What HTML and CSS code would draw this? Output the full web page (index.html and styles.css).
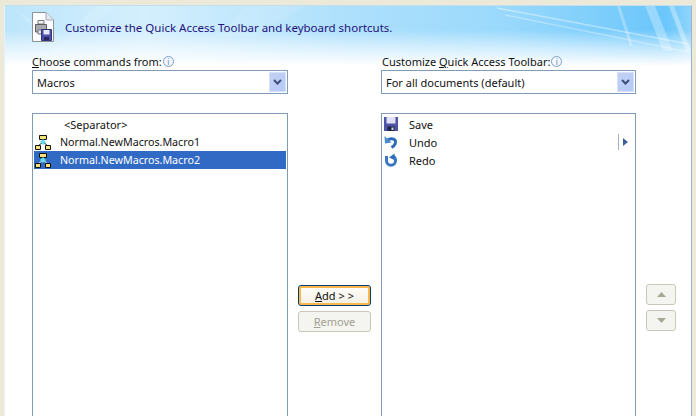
FILE: index.html
```html
<!DOCTYPE html>
<html lang="en">
<head>
  <meta charset="UTF-8">
  <title>Customize</title>
  <link rel="stylesheet" href="styles.css">
</head>
<body>
  <div class="panel">
    <!-- Streaks over the banner background -->
    <svg class="streaks" width="688" height="62" viewBox="0 0 688 62">
      <g fill="#fff">
        <path d="M14 8L20 8L62 50L56 50Z" opacity=".12"/>
        <path d="M90 0L110 0L60 45L48 45Z" opacity=".1"/>
        <path d="M240 0L300 0L250 30L215 30Z" opacity=".1"/>
        <path d="M612 0L615 0L628 40L625 40Z" opacity=".3"/>
        <path d="M640 0L650 0L668 45L658 45Z" opacity=".3"/>
        <path d="M664 0L669 0L686 45L681 45Z" opacity=".35"/>
      </g>
      <g stroke="#fff" fill="none">
        <path d="M492 2L684 38" stroke-width="1.500" opacity=".4"/>
        <path d="M500 9L684 46" stroke-width="1.500" opacity=".3"/>
      </g>
    </svg>

    <!-- Banner -->
    <div class="banner">
      <svg class="banner-icon" width="22" height="31" viewBox="0 0 22 31">
        <path d="M.5.5H14L21.5 8V29.5H.5Z" fill="#fbfcfe" stroke="#8c9097"/>
        <path d="M14 .5V8H21.5" fill="#e4e8ee" stroke="#a5a9b0"/>
        <path d="M6 8.500H12V12H6Z" fill="#f3f3f3" stroke="#77797c"/>
        <path d="M3.500 12.500H14.500V20H3.500Z" fill="#a9abad" stroke="#5d6063"/>
        <path d="M6 18H12V22H6Z" fill="#e9e9e9" stroke="#77797c"/>
        <path d="M9.500 17.500H19.500V28.500H9.500Z" fill="#4a4fa8" stroke="#34367c"/>
        <path d="M11.500 18H17.500V22.500H11.500Z" fill="#e5e8fa"/>
        <path d="M12 25H17V28H12Z" fill="#26285e"/>
      </svg>
      <span class="banner-text">Customize the Quick Access Toolbar and keyboard shortcuts.</span>
    </div>

    <div class="columns">
      <!-- Commands -->
      <div class="col">
        <div class="label"><u>C</u>hoose commands from:<span class="info">i</span></div>
        <div class="combo">
          <span>Macros</span>
          <span class="combo-btn">
            <svg width="9" height="6" viewBox="0 0 9 6"><path d="M1 1L4.500 4.500L8 1" fill="none" stroke="#3d4f78" stroke-width="2"/></svg>
          </span>
        </div>
        <div class="list">
          <div class="row"><span class="sep-text">&lt;Separator&gt;</span></div>
          <div class="row">
            <svg class="macro" width="16" height="15" viewBox="0 0 16 15">
              <path d="M8 4V7M3 11L8 7L13 11" fill="none" stroke="#222"/>
              <path d="M4.500 .5H11.500V4.500H4.500ZM.5 10.500H5.500V14.500H.5ZM10.500 10.500H15.500V14.500H10.500Z" fill="#f7e27a" stroke="#111"/>
              <path d="M8 4L11 7L8 10L5 7Z" fill="#62dbe6"/>
            </svg>
            <span class="macro-text">Normal.NewMacros.Macro1</span>
          </div>
          <div class="row selected">
            <svg class="macro" width="16" height="15" viewBox="0 0 16 15">
              <path d="M8 4V7M3 11L8 7L13 11" fill="none" stroke="#eee"/>
              <path d="M4.500 .5H11.500V4.500H4.500ZM.5 10.500H5.500V14.500H.5ZM10.500 10.500H15.500V14.500H10.500Z" fill="#f7e27a" stroke="#111"/>
              <path d="M8 4L11 7L8 10L5 7Z" fill="#62dbe6"/>
            </svg>
            <span class="macro-text">Normal.NewMacros.Macro2</span>
          </div>
        </div>
      </div>

      <!-- Add / Remove -->
      <div class="mid">
        <button class="btn btn-default" type="button"><u>A</u>dd &gt; &gt;</button>
        <button class="btn" type="button" disabled><u>R</u>emove</button>
      </div>

      <!-- Toolbar -->
      <div class="col col-right">
        <div class="label label-right">Customize <u>Q</u>uick Access Toolbar:<span class="info">i</span></div>
        <div class="combo">
          <span>For all documents (default)</span>
          <span class="combo-btn">
            <svg width="9" height="6" viewBox="0 0 9 6"><path d="M1 1L4.500 4.500L8 1" fill="none" stroke="#3d4f78" stroke-width="2"/></svg>
          </span>
        </div>
        <div class="list">
          <div class="row row-toolbar">
            <svg class="tool" width="14" height="14" viewBox="0 0 14 14">
              <path d="M0 0H14V14H0Z" fill="#4f54a6"/>
              <path d="M2.500 0H11.500V6.500H2.500Z" fill="#dfe2f6"/>
              <path d="M3.500 9.500H10.500V14H3.500Z" fill="#1f2440"/>
              <path d="M7.500 10.500H9.500V13H7.500Z" fill="#d4d8ee"/>
            </svg>
            <span>Save</span>
          </div>
          <div class="row row-toolbar">
            <svg class="tool" width="14" height="14" viewBox="0 0 14 14">
              <path d="M3 5.500C5 3.500 9 3 11 5C12.500 7 11.500 10 7.500 12.500" fill="none" stroke="#2f6cb8" stroke-width="3"/>
              <path d="M.5 1L1 8.500L7.500 7.500Z" fill="#4a8ad0"/>
            </svg>
            <span>Undo</span>
            <span class="flyout"><svg width="5" height="8" viewBox="0 0 5 8"><path d="M0 0L5 4L0 8Z" fill="#3f5f9e"/></svg></span>
          </div>
          <div class="row row-toolbar">
            <svg class="tool" width="14" height="14" viewBox="0 0 14 14">
              <path d="M2.500 3V7.500C2.500 10.500 4.500 12.300 7 12.300C9.500 12.300 11.500 10.500 11.500 7.500C11.500 5.500 10.500 4 9 3.500" fill="none" stroke="#3a78c4" stroke-width="3"/>
              <path d="M5 4.500L10.500 .5V7Z" fill="#2f6cb8"/>
            </svg>
            <span>Redo</span>
          </div>
        </div>
      </div>

      <!-- Move up / down -->
      <div class="move">
        <button class="btn btn-move" type="button" disabled>
          <svg width="9" height="5" viewBox="0 0 9 5"><path d="M4.500 0L9 5H0Z" fill="#a9a897"/></svg>
        </button>
        <button class="btn btn-move" type="button" disabled>
          <svg width="9" height="5" viewBox="0 0 9 5"><path d="M0 0H9L4.500 5Z" fill="#a9a897"/></svg>
        </button>
      </div>
    </div>
  </div>
</body>
</html>
```

FILE: styles.css
```css
html, body {
  margin: 0;
  height: 100%;
  overflow: hidden;
}
body {
  background: #ece9d8;
  font-family: "Noto Sans", "Open Sans", sans-serif;
  font-size: 11px;
  color: #111;
  padding: 5px 4px 0 4px;
  box-sizing: border-box;
}
.panel {
  height: 100%;
  border-top: 1px solid #c4dff2;
  border-left: 1px solid #e4f3fb;
  border-right: 1px solid #9cb4cf;
  box-sizing: border-box;
  padding-left: 27px;
  position: relative;
  background-color: #fff;
  background-image:
    linear-gradient(rgba(255,255,255,0) 0, rgba(255,255,255,0) 24px, rgba(255,255,255,.55) 42px, #fff 60px),
    linear-gradient(90deg, #bce5fb 0, #d4effd 140px, #aee0fc 340px, #9ad9fc 500px, #6ac6fb 660px, #8ed4fb 100%);
  background-size: 100% 62px;
  background-repeat: no-repeat;
}
.streaks {
  position: absolute;
  left: 0;
  top: 0;
}
.banner {
  position: relative;
  display: flex;
  align-items: center;
  height: 33px;
  padding-top: 5px;
}
.banner-icon {
  margin-right: 11px;
}
.banner-text {
  font-size: 11.5px;
  color: #23127c;
}
.columns {
  position: relative;
  display: flex;
  margin-top: 10px;
}
.col {
  width: 256px;
  flex: none;
}
.col-right {
  width: 255px;
}
.label {
  height: 16px;
  line-height: 16px;
  white-space: nowrap;
}
.label-right {
  padding-left: 1px;
}
.info {
  display: inline-block;
  width: 9px;
  height: 9px;
  line-height: 9px;
  margin-left: 1px;
  border: 1px solid #7b9ec8;
  border-radius: 50%;
  font-size: 8px;
  text-align: center;
  color: #5a7fae;
  background: #f4f9ff;
  vertical-align: 1px;
}
.combo {
  display: flex;
  align-items: center;
  justify-content: space-between;
  height: 24px;
  border: 1px solid #7f9db9;
  box-sizing: border-box;
  background: #fff;
  padding: 1px 1px 1px 4px;
}
.combo-btn {
  display: flex;
  align-items: center;
  justify-content: center;
  width: 17px;
  height: 100%;
  background: linear-gradient(135deg, #c3d2f3, #b4c9f7);
  border: 1px solid #d6e0f8;
  box-sizing: border-box;
}
.list {
  height: 320px;
  margin-top: 19px;
  border: 1px solid #7f9db9;
  box-sizing: border-box;
  background: #fff;
  padding: 1px;
}
.row {
  display: flex;
  align-items: center;
  height: 18px;
  white-space: nowrap;
}
.sep-text {
  margin-left: 30px;
}
.macro {
  margin-left: 1px;
  flex: none;
}
.macro-text {
  margin-left: 9px;
  font-size: 10.7px;
}
.selected {
  background: #316ac5;
  color: #fff;
}
.tool {
  margin-left: 1px;
  margin-right: 11px;
  flex: none;
}
.flyout {
  display: flex;
  align-items: center;
  height: 16px;
  margin-left: auto;
  margin-right: 6px;
  padding-left: 4px;
  border-left: 1px solid #a6aeb8;
}
.mid {
  width: 93px;
  flex: none;
  display: flex;
  flex-direction: column;
  align-items: center;
  gap: 5px;
  padding-top: 231px;
}
.move {
  flex: none;
  display: flex;
  flex-direction: column;
  gap: 5px;
  margin-left: 10px;
  padding-top: 230px;
}
.btn {
  width: 73px;
  height: 21px;
  padding: 0;
  border: 1px solid #c9c7ba;
  border-radius: 3px;
  background: #f4f4f0;
  color: #a1a192;
  font-family: inherit;
  font-size: 11px;
  display: flex;
  align-items: center;
  justify-content: center;
  white-space: pre;
}
.btn-default {
  border-color: #003c74;
  color: #111;
  background: linear-gradient(#fffefb, #f2efe3);
  box-shadow: inset 0 0 0 2px #f8b84a;
}
.btn-move {
  width: 30px;
}
```
